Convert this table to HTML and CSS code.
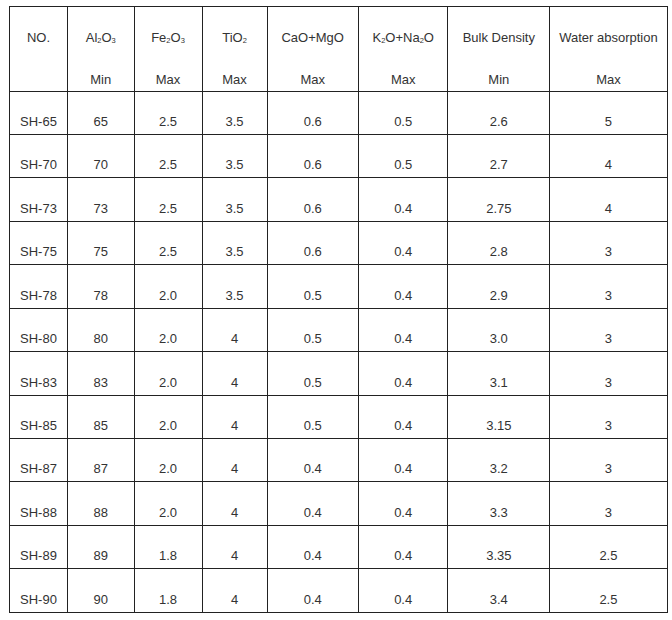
FILE: index.html
```html
<!DOCTYPE html>
<html>
<head>
<meta charset="utf-8">
<link rel="stylesheet" href="styles.css">
</head>
<body>
<div class="spec">
  <div class="h"><span>NO.</span><span></span></div>
  <div class="h"><span>Al<sub>2</sub>O<sub>3</sub></span><span>Min</span></div>
  <div class="h"><span>Fe<sub>2</sub>O<sub>3</sub></span><span>Max</span></div>
  <div class="h"><span>TiO<sub>2</sub></span><span>Max</span></div>
  <div class="h"><span>CaO+MgO</span><span>Max</span></div>
  <div class="h"><span>K<sub>2</sub>O+Na<sub>2</sub>O</span><span>Max</span></div>
  <div class="h"><span>Bulk Density</span><span>Min</span></div>
  <div class="h"><span>Water absorption</span><span>Max</span></div>

  <div class="c">SH-65</div><div class="c">65</div><div class="c">2.5</div><div class="c">3.5</div><div class="c">0.6</div><div class="c">0.5</div><div class="c">2.6</div><div class="c">5</div>
  <div class="c">SH-70</div><div class="c">70</div><div class="c">2.5</div><div class="c">3.5</div><div class="c">0.6</div><div class="c">0.5</div><div class="c">2.7</div><div class="c">4</div>
  <div class="c">SH-73</div><div class="c">73</div><div class="c">2.5</div><div class="c">3.5</div><div class="c">0.6</div><div class="c">0.4</div><div class="c">2.75</div><div class="c">4</div>
  <div class="c">SH-75</div><div class="c">75</div><div class="c">2.5</div><div class="c">3.5</div><div class="c">0.6</div><div class="c">0.4</div><div class="c">2.8</div><div class="c">3</div>
  <div class="c">SH-78</div><div class="c">78</div><div class="c">2.0</div><div class="c">3.5</div><div class="c">0.5</div><div class="c">0.4</div><div class="c">2.9</div><div class="c">3</div>
  <div class="c">SH-80</div><div class="c">80</div><div class="c">2.0</div><div class="c">4</div><div class="c">0.5</div><div class="c">0.4</div><div class="c">3.0</div><div class="c">3</div>
  <div class="c">SH-83</div><div class="c">83</div><div class="c">2.0</div><div class="c">4</div><div class="c">0.5</div><div class="c">0.4</div><div class="c">3.1</div><div class="c">3</div>
  <div class="c">SH-85</div><div class="c">85</div><div class="c">2.0</div><div class="c">4</div><div class="c">0.5</div><div class="c">0.4</div><div class="c">3.15</div><div class="c">3</div>
  <div class="c">SH-87</div><div class="c">87</div><div class="c">2.0</div><div class="c">4</div><div class="c">0.4</div><div class="c">0.4</div><div class="c">3.2</div><div class="c">3</div>
  <div class="c">SH-88</div><div class="c">88</div><div class="c">2.0</div><div class="c">4</div><div class="c">0.4</div><div class="c">0.4</div><div class="c">3.3</div><div class="c">3</div>
  <div class="c">SH-89</div><div class="c">89</div><div class="c">1.8</div><div class="c">4</div><div class="c">0.4</div><div class="c">0.4</div><div class="c">3.35</div><div class="c">2.5</div>
  <div class="c">SH-90</div><div class="c">90</div><div class="c">1.8</div><div class="c">4</div><div class="c">0.4</div><div class="c">0.4</div><div class="c">3.4</div><div class="c">2.5</div>
</div>
</body>
</html>
```

FILE: styles.css
```css
html, body {
  background: #ffffff;
}
body {
  margin: 6px 0 0 9px;
  font-family: "Liberation Sans", Arial, sans-serif;
  font-size: 13px;
  color: #333333;
}
.spec {
  display: grid;
  width: max-content;
  grid-template-columns: 57px 65.5px 67px 64px 90.4px 88.6px 100.7px 116.5px;
  grid-template-rows: 83.5px repeat(12, 42.45px);
  gap: 1px;
  padding: 1px;
  background: #222222;
}
.h, .c {
  background: #ffffff;
  text-align: center;
  line-height: 15px;
}
.h {
  display: flex;
  flex-direction: column;
  justify-content: space-between;
  padding: 23px 0 4px;
}
.h span {
  display: block;
  height: 15px;
  white-space: nowrap;
}
.c {
  display: flex;
  align-items: flex-end;
  justify-content: center;
  padding-bottom: 5px;
}
sub {
  font-size: 7.5px;
  line-height: 0;
  vertical-align: -1px;
}
```
